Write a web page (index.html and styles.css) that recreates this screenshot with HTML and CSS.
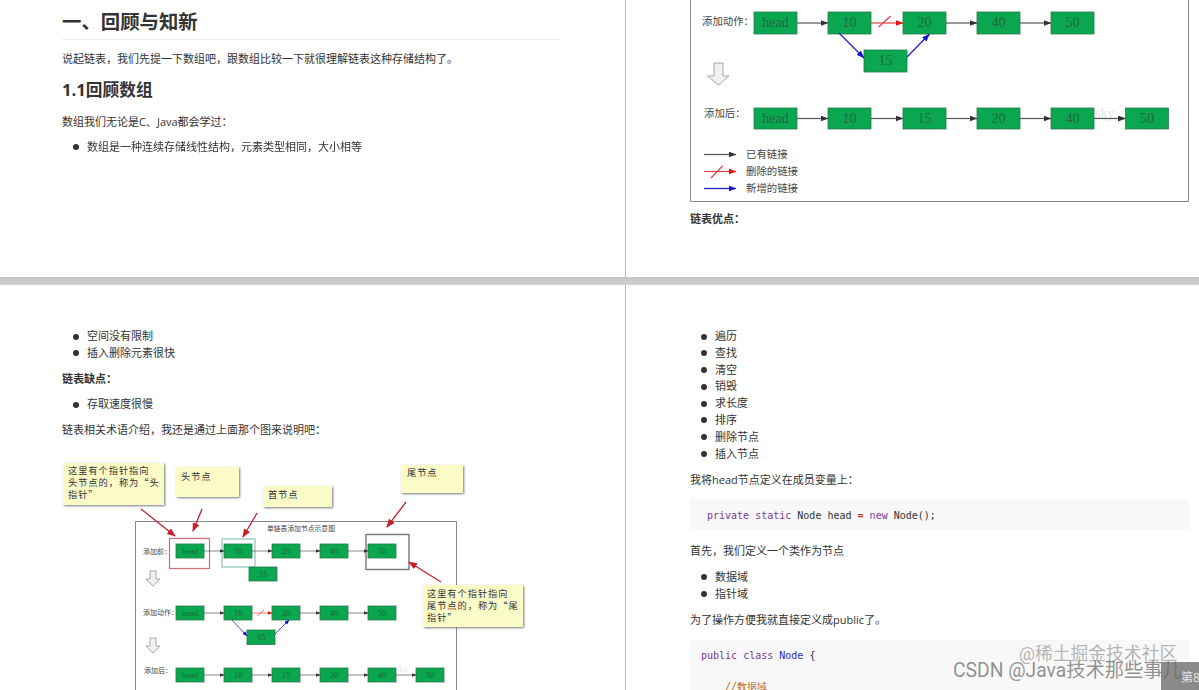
FILE: index.html
```html
<!DOCTYPE html>
<html lang="zh">
<head>
<meta charset="utf-8">
<title>链表</title>
<link rel="stylesheet" href="styles.css">
</head>
<body>
<div class="sheet">
  <section class="page page-a">
    <h1>一、回顾与知新</h1>
    <p>说起链表，我们先提一下数组吧，跟数组比较一下就很理解链表这种存储结构了。</p>
    <h2>1.1回顾数组</h2>
    <p>数组我们无论是C、Java都会学过：</p>
    <ul><li>数组是一种连续存储线性结构，元素类型相同，大小相等</li></ul>
  </section>
  <section class="page page-b">
    <svg class="fig fig-top" width="499" height="202" viewBox="0 0 499 202">
      <defs>
        <marker id="ah-dark" markerWidth="8" markerHeight="6" refX="7.5" refY="3" orient="auto" markerUnits="userSpaceOnUse"><path d="M0 0L8 3L0 6Z" fill="#333"/></marker>
        <marker id="ah-red" markerWidth="8" markerHeight="6" refX="7.5" refY="3" orient="auto" markerUnits="userSpaceOnUse"><path d="M0 0L8 3L0 6Z" fill="#e01515"/></marker>
        <marker id="ah-blue" markerWidth="8" markerHeight="6" refX="7.5" refY="3" orient="auto" markerUnits="userSpaceOnUse"><path d="M0 0L8 3L0 6Z" fill="#1414c8"/></marker>
        <marker id="ah-sm" markerWidth="5" markerHeight="4" refX="4.5" refY="2" orient="auto" markerUnits="userSpaceOnUse"><path d="M0 0L5 2L0 4Z" fill="#333"/></marker>
        <marker id="ah-smred" markerWidth="5" markerHeight="4" refX="4.5" refY="2" orient="auto" markerUnits="userSpaceOnUse"><path d="M0 0L5 2L0 4Z" fill="#e01515"/></marker>
        <marker id="ah-smblue" markerWidth="5" markerHeight="4" refX="4.5" refY="2" orient="auto" markerUnits="userSpaceOnUse"><path d="M0 0L5 2L0 4Z" fill="#1414c8"/></marker>
        <marker id="ah-note" markerWidth="9" markerHeight="7" refX="8" refY="3.5" orient="auto" markerUnits="userSpaceOnUse"><path d="M0 0L9 3.5L0 7Z" fill="#c8202c"/></marker>
      </defs>
      <path class="frame" d="M0.5 -2V201.5H498.5V-2"/>
      <text class="lab" x="12" y="25">添加动作：</text>
      <rect class="node" x="64" y="12" width="43" height="22"/><text class="val" x="85.5" y="27">head</text>
      <rect class="node" x="138" y="12" width="43" height="22"/><text class="val" x="159.5" y="27">10</text>
      <rect class="node" x="213" y="12" width="43" height="22"/><text class="val" x="234.5" y="27">20</text>
      <rect class="node" x="287" y="12" width="43" height="22"/><text class="val" x="308.5" y="27">40</text>
      <rect class="node" x="361" y="12" width="43" height="22"/><text class="val" x="382.5" y="27">50</text>
      <rect class="node" x="174" y="50" width="43" height="22"/><text class="val" x="195.5" y="65">15</text>
      <line class="ln" x1="107" y1="23" x2="138" y2="23" marker-end="url(#ah-dark)"/>
      <line class="ln-red" x1="181" y1="23" x2="213" y2="23" marker-end="url(#ah-red)"/>
      <line class="ln-red" x1="188.5" y1="27" x2="200.7" y2="16"/>
      <line class="ln" x1="256" y1="23" x2="287" y2="23" marker-end="url(#ah-dark)"/>
      <line class="ln" x1="330" y1="23" x2="361" y2="23" marker-end="url(#ah-dark)"/>
      <line class="ln-blue" x1="149" y1="33" x2="174" y2="58" marker-end="url(#ah-blue)"/>
      <line class="ln-blue" x1="217" y1="57" x2="239.5" y2="34" marker-end="url(#ah-blue)"/>
      <polygon class="down" points="24,63 33,63 33,76 39,76 28.5,85 17.5,76 24,76"/>
      <text class="lab" x="14" y="117">添加后：</text>
      <rect class="node" x="64" y="108" width="43" height="21"/><text class="val" x="85.5" y="123">head</text>
      <rect class="node" x="138" y="108" width="43" height="21"/><text class="val" x="159.5" y="123">10</text>
      <rect class="node" x="213" y="108" width="43" height="21"/><text class="val" x="234.5" y="123">15</text>
      <rect class="node" x="287" y="108" width="43" height="21"/><text class="val" x="308.5" y="123">20</text>
      <rect class="node" x="361" y="108" width="43" height="21"/><text class="val" x="382.5" y="123">40</text>
      <rect class="node" x="435.5" y="108" width="43" height="21"/><text class="val" x="457" y="123">50</text>
      <text class="sky" x="405" y="118">sky</text>
      <line class="ln" x1="107" y1="118.5" x2="138" y2="118.5" marker-end="url(#ah-dark)"/>
      <line class="ln" x1="181" y1="118.5" x2="213" y2="118.5" marker-end="url(#ah-dark)"/>
      <line class="ln" x1="256" y1="118.5" x2="287" y2="118.5" marker-end="url(#ah-dark)"/>
      <line class="ln" x1="330" y1="118.5" x2="361" y2="118.5" marker-end="url(#ah-dark)"/>
      <line class="ln" x1="404" y1="118.5" x2="435.5" y2="118.5" marker-end="url(#ah-dark)"/>
      <line class="ln" x1="14" y1="154.5" x2="46" y2="154.5" marker-end="url(#ah-dark)"/>
      <text class="lab" x="56" y="158">已有链接</text>
      <line class="ln-red" x1="14" y1="171.5" x2="46" y2="171.5" marker-end="url(#ah-red)"/>
      <line class="ln-red" x1="21" y1="178" x2="32.6" y2="166"/>
      <text class="lab" x="56" y="175">删除的链接</text>
      <line class="ln-blue" x1="14" y1="188.5" x2="46" y2="188.5" marker-end="url(#ah-blue)"/>
      <text class="lab" x="56" y="192">新增的链接</text>
    </svg>
    <p class="strong">链表优点：</p>
  </section>
  <div class="divider"></div>
  <section class="page page-c">
    <ul><li>空间没有限制</li><li>插入删除元素很快</li></ul>
    <p class="strong">链表缺点：</p>
    <ul><li>存取速度很慢</li></ul>
    <p class="lead">链表相关术语介绍，我还是通过上面那个图来说明吧：</p>
    <svg class="fig fig-terms" width="470" height="250" viewBox="62 445 470 250">
      <rect class="note" x="63" y="463" width="101" height="42"/>
      <text class="note-t" x="68" y="474">这里有个指针指向</text>
      <text class="note-t" x="68" y="486">头节点的，称为“头</text>
      <text class="note-t" x="68" y="498">指针”</text>
      <rect class="note" x="176" y="467" width="63" height="30"/>
      <text class="note-t" x="181" y="480">头节点</text>
      <rect class="note" x="263" y="486" width="69" height="21"/>
      <text class="note-t" x="268" y="498">首节点</text>
      <rect class="note" x="401" y="465" width="62" height="28"/>
      <text class="note-t" x="407" y="476">尾节点</text>
      <path class="frame" d="M135.5 695V521.5H456.5V695"/>
      <text class="title-t" x="267" y="531">单链表添加节点示意图</text>

      <text class="lab-sm" x="143" y="554">添加前：</text>
      <rect class="box-red" x="169.5" y="538.5" width="40" height="30"/>
      <rect class="box-teal" x="222" y="539" width="33" height="28"/>
      <rect class="box-gray" x="366" y="534.5" width="43" height="35"/>
      <rect class="node" x="176" y="544" width="28" height="14"/><text class="val-sm" x="190" y="554">head</text>
      <rect class="node" x="224" y="544" width="28" height="14"/><text class="val-sm" x="238" y="554">10</text>
      <rect class="node" x="272" y="544" width="28" height="14"/><text class="val-sm" x="286" y="554">20</text>
      <rect class="node" x="320" y="544" width="28" height="14"/><text class="val-sm" x="334" y="554">40</text>
      <rect class="node" x="368" y="544" width="28" height="14"/><text class="val-sm" x="382" y="554">50</text>
      <rect class="node" x="249" y="567" width="28" height="14"/><text class="val-sm" x="263" y="577">15</text>
      <line class="ln-thin" x1="204" y1="551" x2="224" y2="551" marker-end="url(#ah-sm)"/>
      <line class="ln-thin" x1="252" y1="551" x2="272" y2="551" marker-end="url(#ah-sm)"/>
      <line class="ln-thin" x1="300" y1="551" x2="320" y2="551" marker-end="url(#ah-sm)"/>
      <line class="ln-thin" x1="348" y1="551" x2="368" y2="551" marker-end="url(#ah-sm)"/>
      <polygon class="down" points="150,571 156,571 156,579 160,579 153,586 146,579 150,579"/>

      <text class="lab-sm" x="143" y="615">添加动作：</text>
      <rect class="node" x="176" y="606" width="28" height="14"/><text class="val-sm" x="190" y="616">head</text>
      <rect class="node" x="224" y="606" width="28" height="14"/><text class="val-sm" x="238" y="616">10</text>
      <rect class="node" x="272" y="606" width="28" height="14"/><text class="val-sm" x="286" y="616">20</text>
      <rect class="node" x="320" y="606" width="28" height="14"/><text class="val-sm" x="334" y="616">40</text>
      <rect class="node" x="368" y="606" width="28" height="14"/><text class="val-sm" x="382" y="616">50</text>
      <rect class="node" x="247" y="630" width="28" height="14.500"/><text class="val-sm" x="261" y="640">15</text>
      <line class="ln-thin" x1="204" y1="613" x2="224" y2="613" marker-end="url(#ah-sm)"/>
      <line class="ln-thinred" x1="252" y1="613" x2="272" y2="613" marker-end="url(#ah-smred)"/>
      <line class="ln-thinred" x1="257" y1="616" x2="264" y2="610"/>
      <line class="ln-thin" x1="300" y1="613" x2="320" y2="613" marker-end="url(#ah-sm)"/>
      <line class="ln-thin" x1="348" y1="613" x2="368" y2="613" marker-end="url(#ah-sm)"/>
      <line class="ln-thinblue" x1="232" y1="620" x2="247" y2="636" marker-end="url(#ah-smblue)"/>
      <line class="ln-thinblue" x1="275" y1="634" x2="289" y2="620" marker-end="url(#ah-smblue)"/>
      <polygon class="down" points="150,638 156,638 156,646 160,646 153,653 146,646 150,646"/>

      <text class="lab-sm" x="144" y="673">添加后：</text>
      <rect class="node" x="176" y="668" width="28" height="14"/><text class="val-sm" x="190" y="678">head</text>
      <rect class="node" x="224" y="668" width="28" height="14"/><text class="val-sm" x="238" y="678">10</text>
      <rect class="node" x="272" y="668" width="28" height="14"/><text class="val-sm" x="286" y="678">15</text>
      <rect class="node" x="320" y="668" width="28" height="14"/><text class="val-sm" x="334" y="678">20</text>
      <rect class="node" x="368" y="668" width="28" height="14"/><text class="val-sm" x="382" y="678">40</text>
      <rect class="node" x="416" y="668" width="28" height="14"/><text class="val-sm" x="430" y="678">50</text>
      <text class="sky-sm" x="396" y="672">sky</text>
      <line class="ln-thin" x1="204" y1="675" x2="224" y2="675" marker-end="url(#ah-sm)"/>
      <line class="ln-thin" x1="252" y1="675" x2="272" y2="675" marker-end="url(#ah-sm)"/>
      <line class="ln-thin" x1="300" y1="675" x2="320" y2="675" marker-end="url(#ah-sm)"/>
      <line class="ln-thin" x1="348" y1="675" x2="368" y2="675" marker-end="url(#ah-sm)"/>
      <line class="ln-thin" x1="396" y1="675" x2="416" y2="675" marker-end="url(#ah-sm)"/>

      <rect class="note" x="423" y="585" width="100" height="42"/>
      <text class="note-t" x="427" y="597">这里有个指针指向</text>
      <text class="note-t" x="427" y="609">尾节点的，称为“尾</text>
      <text class="note-t" x="427" y="621">指针”</text>
      <line class="ln-call" x1="141" y1="509" x2="175" y2="536" marker-end="url(#ah-note)"/>
      <line class="ln-call" x1="202" y1="509" x2="193" y2="531" marker-end="url(#ah-note)"/>
      <line class="ln-call" x1="257" y1="513" x2="243" y2="537" marker-end="url(#ah-note)"/>
      <line class="ln-call" x1="406" y1="502" x2="387" y2="527" marker-end="url(#ah-note)"/>
      <line class="ln-call" x1="441" y1="582" x2="409" y2="562" marker-end="url(#ah-note)"/>
    </svg>
  </section>
  <section class="page page-d">
    <ul class="methods">
      <li>遍历</li><li>查找</li><li>清空</li><li>销毁</li><li>求长度</li><li>排序</li><li>删除节点</li><li>插入节点</li>
    </ul>
    <p>我将head节点定义在成员变量上：</p>
    <pre class="code code-one"><code><span class="kw">private</span> <span class="kw">static</span> Node head <span class="op">=</span> <span class="kw">new</span> Node();</code></pre>
    <p>首先，我们定义一个类作为节点</p>
    <ul><li>数据域</li><li>指针域</li></ul>
    <p>为了操作方便我就直接定义成public了。</p>
    <pre class="code code-two"><code><span class="kw">public</span> <span class="kw">class</span> <span class="cls">Node</span> {

    <span class="cm">//数据域</span></code></pre>
  </section>
  <div class="corner">第8</div>
  <div class="mark mark-juejin">@稀土掘金技术社区</div>
  <div class="mark mark-csdn">CSDN @Java技术那些事儿</div>
</div>
</body>
</html>
```
FILE: styles.css
```css
* { box-sizing: border-box; }
html, body { margin: 0; padding: 0; background: #fff; }
.sheet {
  position: relative;
  width: 1199px;
  height: 690px;
  overflow: hidden;
  display: grid;
  grid-template-columns: 626px 573px;
  grid-template-rows: 277px 8px 405px;
  font-family: "Open Sans", "Noto Sans CJK SC", sans-serif;
  font-size: 11px;
  line-height: 16.8px;
  color: #333;
  filter: blur(0.35px);
}
.page { overflow: hidden; background: #fff; }
.page-a, .page-c { border-right: 1px solid #bbb; padding: 0 65px 0 62px; }
.page-b, .page-d { padding: 0 10px 0 64px; }
.page-a { padding-top: 8px; }
.page-c, .page-d { padding-top: 43px; }
.divider {
  grid-column: 1 / 3;
  background: linear-gradient(#c4c4c4, #d2d2d2);
}
h1 {
  margin: 0 0 11px;
  font-size: 19.4px;
  line-height: 28px;
  height: 32px;
  font-weight: 700;
  border-bottom: 1px solid #eee;
}
h2 {
  margin: 11px 0 13px;
  font-size: 16.7px;
  line-height: 22px;
  font-weight: 700;
}
p { margin: 0 0 9px; }
.page-a p:nth-of-type(2) { margin-bottom: 8px; }
ul { margin: 0 0 9px; padding: 0 0 0 25px; list-style: none; }
.methods { margin-bottom: 10px; }
li { position: relative; }
li::before {
  content: "";
  position: absolute;
  left: -14px;
  top: 5.500px;
  width: 6px;
  height: 6px;
  border-radius: 50%;
  background: #333;
}
.strong { font-weight: 700; }
.lead { margin-bottom: 6px; }
.fig { display: block; }
.fig-top { margin-bottom: 9px; }
.code {
  margin: 0 0 14px;
  background: #f8f8f8;
  font-family: "Liberation Mono", "Noto Sans CJK SC", monospace;
  font-size: 10px;
  line-height: 16px;
  color: #333;
  width: 499px;
}
.code-one { height: 29px; padding: 8px 0 0 17px; margin-top: 11px; box-shadow: 0 0 1px #eee; }
.code-two { padding: 9px 0 0 11px; margin-top: 12px; height: 80px; line-height: 14.500px; }
.kw { color: #7d3c98; }
.op { color: #c0392b; font-weight: 700; }
.cls { color: #2c2cc4; }
.cm { color: #b5651d; }
.mark {
  position: absolute;
  font-family: "Roboto", "Noto Sans CJK SC", sans-serif;
  white-space: nowrap;
  line-height: 20px;
}
.mark-juejin { left: 1019px; top: 644px; font-size: 17.800px; color: rgba(120,120,120,.55); }
.mark-csdn { left: 953px; top: 661px; font-size: 19.300px; color: rgba(110,110,110,.75); }
.corner {
  position: absolute;
  left: 1161px;
  top: 662px;
  width: 38px;
  height: 28px;
  padding: 8px 0 0 20px;
  background: rgba(125,125,125,.9);
  color: #e4e4e4;
  font-size: 12px;
  line-height: 16px;
  white-space: nowrap;
  overflow: hidden;
}
/* diagrams */
.frame { fill: none; stroke: #888; stroke-width: 1; }
.node { fill: #0ba650; stroke: #2b7b4d; stroke-width: .8; }
.val, .val-sm { text-anchor: middle; font-family: "Liberation Serif", serif; fill: #1c6a3d; }
.val { font-size: 14px; }
.val-sm { font-size: 8.500px; fill: #17693a; }
.lab, .lab-sm, .title-t { font-family: "Noto Sans CJK SC", sans-serif; fill: #444; }
.lab { font-size: 10.4px; }
.lab-sm { font-size: 7px; }
.title-t { font-size: 6.800px; }
.sky { font-family: "Liberation Serif", serif; font-size: 14px; fill: #e4e4e4; }
.sky-sm { font-family: "Liberation Serif", serif; font-size: 9px; fill: #e4e4e4; }
.ln { stroke: #555; stroke-width: 1.200; }
.ln-red { stroke: #e04040; stroke-width: 1.200; }
.ln-blue { stroke: #2222c8; stroke-width: 1.300; }
.ln-thin { stroke: #555; stroke-width: .7; }
.ln-thinred { stroke: #e04040; stroke-width: .7; }
.ln-thinblue { stroke: #2222c8; stroke-width: .8; }
.ln-call { stroke: #c8202c; stroke-width: 1.300; }
.down { fill: #eef1ef; stroke: #a8a8a8; stroke-width: 1; }
.note { fill: #fbfbc8; stroke: none; filter: drop-shadow(1px 1px 1px #777); }
.note-t { font-family: "Noto Sans CJK SC", sans-serif; font-size: 9.200px; letter-spacing: 1px; fill: #333; }
.box-red { fill: none; stroke: #d86a70; stroke-width: 1.200; }
.box-teal { fill: none; stroke: #b9dcd6; stroke-width: 2; }
.box-gray { fill: none; stroke: #777; stroke-width: 1.400; }
```
